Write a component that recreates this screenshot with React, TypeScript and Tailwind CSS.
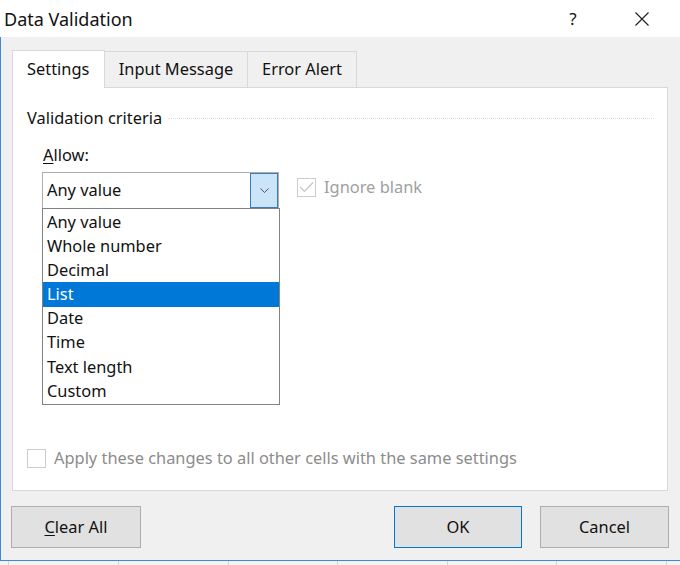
import React from "react";

const font = { fontFamily: '"Noto Sans", "Open Sans", sans-serif' };

function Check({ disabled, checked }: { disabled?: boolean; checked?: boolean }) {
  return (
    <div className="w-[19px] h-[19px] border border-[#cccccc] bg-white flex items-center justify-center shrink-0">
      {checked && (
        <svg width="15" height="12" viewBox="0 0 15 12">
          <path d="M1 6 L5.5 10.5 L14 1.5" fill="none" stroke={disabled ? "#c4c4c4" : "#333"} strokeWidth="1.2" />
        </svg>
      )}
    </div>
  );
}

export default function App() {
  const items = ["Any value", "Whole number", "Decimal", "List", "Date", "Time", "Text length", "Custom"];
  const gridLines = [8, 118, 228, 337, 447, 556, 666];
  return (
    <div className="w-[680px] h-[565px] bg-white flex flex-col overflow-hidden text-[#111]" style={font}>
      {/* Title bar */}
      <div className="h-[37px] flex items-center bg-white shrink-0">
        <div className="pl-[4px] text-[18px] leading-none flex-1">Data Validation</div>
        <div className="w-[30px] text-center text-[17px] leading-none mr-[47px]">?</div>
        <svg width="14" height="14" viewBox="0 0 14 14" className="mr-[31px]">
          <path d="M0.5 0.5 L13.5 13.5 M13.5 0.5 L0.5 13.5" stroke="#222" strokeWidth="1.2" />
        </svg>
      </div>
      {/* Body */}
      <div className="h-[524px] bg-[#f0f0f0] border-l border-b border-[#3c8ad8] flex flex-col shrink-0">
        <div className="flex pl-[11px] mt-[13px] relative z-10 -mb-px items-end">
          <div className="w-[93px] h-[38px] bg-white border border-b-0 border-[#d9d9d9] flex items-center pl-[14px] text-[16.4px]">Settings</div>
          <div className="w-[143px] h-[37px] bg-[#f0f0f0] border-t border-r border-b border-[#d9d9d9] flex items-center justify-center text-[16.4px]">Input Message</div>
          <div className="w-[109px] h-[37px] bg-[#f0f0f0] border-t border-r border-b border-[#d9d9d9] flex items-center justify-center text-[16.4px]">Error Alert</div>
        </div>
        <div className="ml-[11px] w-[656px] h-[404px] bg-white border border-[#d9d9d9] flex flex-col">
          <div className="mt-[19px] h-[22px] flex items-center pl-[14px] pr-[13px]">
            <span className="text-[16.4px] leading-[22px]">Validation criteria</span>
            <div className="flex-1 ml-[6px] border-t border-dotted border-[#dcdcdc]" />
          </div>
          <div className="mt-[15px] h-[22px] pl-[30px] text-[16.4px] leading-[22px]">
            <span className="underline underline-offset-2">A</span>llow:
          </div>
          <div className="mt-[6px] pl-[29px] flex items-start">
            <div className="relative">
              <div className="w-[237px] h-[37px] bg-white border border-[#adadad] flex">
                <div className="flex-1 flex items-center pl-[4px] text-[16.4px]">Any value</div>
                <div className="w-[28px] h-[35px] bg-[#cce4f7] border border-[#3d7ab8] flex items-center justify-center">
                  <svg width="9" height="5" viewBox="0 0 9 5">
                    <path d="M0.5 0.5 L4.5 4.5 L8.5 0.5" fill="none" stroke="#555" strokeWidth="1" />
                  </svg>
                </div>
              </div>
              <div className="absolute left-0 top-[36px] w-[238px] bg-white border border-[#828282] py-[1px]">
                {items.map((it) => (
                  <div
                    key={it}
                    className={
                      "h-[24.15px] pl-[4px] flex items-center text-[16.4px] " +
                      (it === "List" ? "bg-[#0078d7] text-white" : "")
                    }
                  >
                    {it}
                  </div>
                ))}
              </div>
            </div>
            <div className="ml-[18px] mt-[4px] flex items-center gap-[8px]">
              <Check disabled checked />
              <span className="text-[16.4px] text-[#a0a0a0] leading-[22px]">Ignore blank</span>
            </div>
          </div>
          <div className="mt-auto mb-[21px] pl-[14px] flex items-center gap-[8px]">
            <Check />
            <span className="text-[16.4px] text-[#8c8c8c] leading-[22px]">Apply these changes to all other cells with the same settings</span>
          </div>
        </div>
        <div className="mt-[15px] flex pl-[10px] pr-[11px]">
          <div className="w-[130px] h-[42px] bg-[#e1e1e1] border border-[#adadad] flex items-center justify-center text-[16.4px]">
            <span><span className="underline underline-offset-2">C</span>lear All</span>
          </div>
          <div className="flex-1" />
          <div className="w-[128px] h-[42px] bg-[#e1e1e1] border border-[#0078d7] flex items-center justify-center text-[16.4px]">OK</div>
          <div className="w-[129px] h-[42px] ml-[18px] bg-[#e1e1e1] border border-[#adadad] flex items-center justify-center text-[16.4px]">Cancel</div>
        </div>
      </div>
      {/* Grid strip below */}
      <div className="flex-1 bg-[#f3f3f3] relative">
        {gridLines.map((x) => (
          <div key={x} className="absolute top-0 bottom-0 w-px bg-[#d4d4d4]" style={{ left: x }} />
        ))}
      </div>
    </div>
  );
}
